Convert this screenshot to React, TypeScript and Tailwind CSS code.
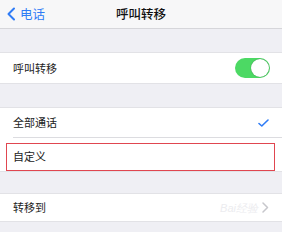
import React from "react";

const font = { fontFamily: '"Noto Sans CJK SC", "Noto Sans", sans-serif' };

export default function App() {
  return (
    <div className="w-[282px] h-[232px] bg-[#efeff4] overflow-hidden text-[#222]" style={font}>
      {/* nav */}
      <div className="relative h-[29px] bg-[#f7f7f8] border-b border-[#d6d6da] flex items-center">
        <div className="flex items-center pl-[6px] text-[#2f7cf6]">
          <svg width="10" height="14" viewBox="0 0 10 14">
            <path d="M8 1.5 L2.5 7 L8 12.5" fill="none" stroke="#2f7cf6" strokeWidth="2" strokeLinecap="round" strokeLinejoin="round" />
          </svg>
          <span className="ml-[4px] text-[12.5px] leading-none">电话</span>
        </div>
        <div className="absolute inset-0 flex items-center justify-center text-[12.5px] font-medium leading-none text-[#111]">
          呼叫转移
        </div>
      </div>
      <div className="h-[23px]" />
      {/* row 1 */}
      <div className="h-[32px] bg-white border-y border-[#e2e2e6] flex items-center justify-between pl-[13px] pr-[12px]">
        <span className="text-[11px] leading-none">呼叫转移</span>
        <div className="relative w-[35px] h-[20px] rounded-full bg-[#4cd964]">
          <div className="absolute right-[1px] top-[1px] w-[18px] h-[18px] rounded-full bg-white shadow-[0_0_1px_rgba(0,0,0,0.5)]" />
        </div>
      </div>
      <div className="h-[23px]" />
      {/* group 2 */}
      <div className="bg-white border-y border-[#e2e2e6]">
        <div className="h-[29px] flex items-center justify-between pl-[13px] pr-[13px]">
          <span className="text-[11px] leading-none">全部通话</span>
          <svg width="11" height="8" viewBox="0 0 11 8">
            <path d="M1 4.5 L3.8 7 L10 1" fill="none" stroke="#2f7cf6" strokeWidth="1.6" strokeLinecap="round" strokeLinejoin="round" />
          </svg>
        </div>
        <div className="ml-[13px] h-px bg-[#dcdce0]" />
        <div className="relative h-[33px] flex items-center pl-[13px] pt-[3px]">
          <span className="text-[11px] leading-none">自定义</span>
          <div className="absolute left-[6px] right-[7px] top-[5px] bottom-[0px] border-[1.5px] border-[#e04650]" />
        </div>
      </div>
      <div className="h-[21px]" />
      {/* row 4 */}
      <div className="relative h-[29px] bg-white border-y border-[#e2e2e6] flex items-center justify-between pl-[13px] pr-[13px]">
        <span className="text-[11px] leading-none">转移到</span>
        <span className="absolute right-[24px] top-[9px] text-[11px] leading-none text-[#ececef] italic" style={{ fontFamily: '"Liberation Sans", sans-serif' }}>Bai经验</span>
        <svg width="7" height="11" viewBox="0 0 7 11">
          <path d="M1 1 L5.5 5.5 L1 10" fill="none" stroke="#c7c7cc" strokeWidth="1.5" strokeLinecap="round" strokeLinejoin="round" />
        </svg>
      </div>
    </div>
  );
}
